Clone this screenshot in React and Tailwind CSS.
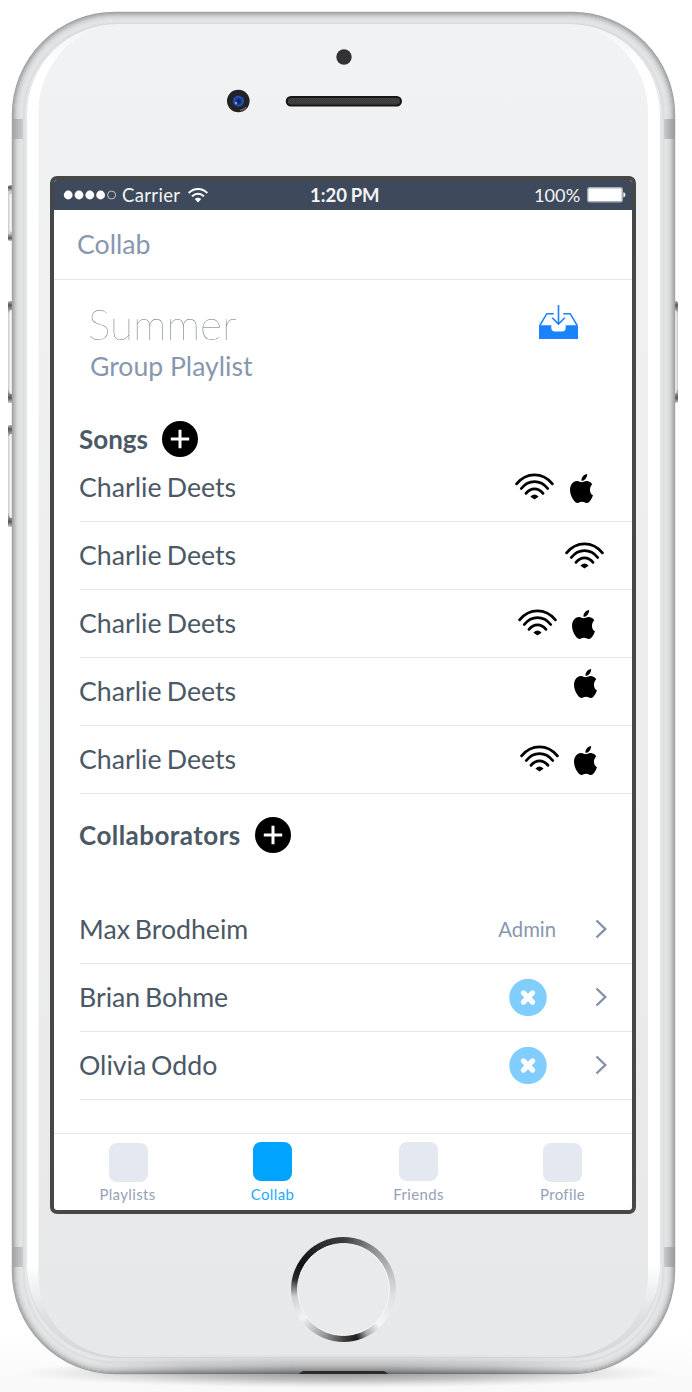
import React from "react";

function PhoneBody() {
  const edge = [
    [0.5, "#a0a1a2"],
    [1.5, "#abacad"],
    [2.5, "#b8b9ba"],
    [3.5, "#c4c5c6"],
    [4.5, "#cfd0d1"],
    [5.5, "#d6d7d8"],
    [6.5, "#dcdddd"],
    [7.5, "#dfe0e0"],
    [8.5, "#e2e3e3"],
    [9.5, "#e4e5e5"],
    [10.5, "#e1e2e3"],
    [11.5, "#dcdee0"],
    [12.5, "#dcdee1"],
    [13.5, "#e6e8ea"],
  ];
  return (
    <svg className="absolute inset-0" width="692" height="1392" viewBox="0 0 692 1392" aria-hidden="true">
      <defs>
        <linearGradient id="panel" x1="0" y1="0" x2="0" y2="1">
          <stop offset="0" stopColor="#f1f2f4" />
          <stop offset="1" stopColor="#e7e8ea" />
        </linearGradient>
        <linearGradient id="side" x1="0" y1="0" x2="0" y2="1">
          <stop offset="0" stopColor="#eff1f3" />
          <stop offset="0.03" stopColor="#ffffff" />
          <stop offset="0.93" stopColor="#ffffff" />
          <stop offset="0.97" stopColor="#dddfe1" />
          <stop offset="1" stopColor="#d6d8da" />
        </linearGradient>
        <linearGradient id="floor" x1="0" y1="0" x2="0" y2="1">
          <stop offset="0" stopColor="#ffffff" />
          <stop offset="1" stopColor="#f8f8f8" />
        </linearGradient>
        <linearGradient id="chin" x1="0" y1="0" x2="0" y2="1">
          <stop offset="0" stopColor="#d4d6d8" stopOpacity="0" />
          <stop offset="0.3" stopColor="#cfd1d3" />
          <stop offset="0.6" stopColor="#b8b9ba" />
          <stop offset="0.85" stopColor="#8a8b8c" />
          <stop offset="1" stopColor="#656667" />
        </linearGradient>
        <linearGradient id="chinfade" x1="0" y1="0" x2="1" y2="0">
          <stop offset="0" stopColor="#fff" stopOpacity="0" />
          <stop offset="0.2" stopColor="#fff" stopOpacity="0.7" />
          <stop offset="0.4" stopColor="#fff" />
          <stop offset="0.6" stopColor="#fff" />
          <stop offset="0.8" stopColor="#fff" stopOpacity="0.7" />
          <stop offset="1" stopColor="#fff" stopOpacity="0" />
        </linearGradient>
        <mask id="chinmask">
          <rect x="90" y="1350" width="507" height="30" fill="url(#chinfade)" />
        </mask>
        <linearGradient id="band" x1="0" y1="0" x2="1" y2="0">
          <stop offset="0" stopColor="#9fa0a1" />
          <stop offset="1" stopColor="#cbcccd" />
        </linearGradient>
        <linearGradient id="bandr" x1="0" y1="0" x2="1" y2="0">
          <stop offset="0" stopColor="#cbcccd" />
          <stop offset="1" stopColor="#979899" />
        </linearGradient>
        <linearGradient id="key" x1="0" y1="0" x2="0" y2="1">
          <stop offset="0" stopColor="#bbb" />
          <stop offset="0.04" stopColor="#555" />
          <stop offset="0.12" stopColor="#cfd0d1" />
          <stop offset="0.86" stopColor="#cfd0d1" />
          <stop offset="0.95" stopColor="#555" />
          <stop offset="1" stopColor="#ccc" />
        </linearGradient>
        <radialGradient id="shadow">
          <stop offset="0" stopColor="#8f8b8b" stopOpacity="0.95" />
          <stop offset="0.5" stopColor="#a5a2a2" stopOpacity="0.65" />
          <stop offset="1" stopColor="#c4c4c4" stopOpacity="0" />
        </radialGradient>
        <radialGradient id="lens" cx="0.5" cy="0.55" r="0.5">
          <stop offset="0" stopColor="#0a1a52" />
          <stop offset="0.35" stopColor="#122f86" />
          <stop offset="0.8" stopColor="#2c55a8" />
          <stop offset="1" stopColor="#14245a" />
        </radialGradient>
        <filter id="soft" x="-5%" y="-5%" width="110%" height="110%">
          <feGaussianBlur stdDeviation="0.7" />
        </filter>
        <pattern id="mesh" width="2" height="2" patternUnits="userSpaceOnUse">
          <rect width="2" height="2" fill="#3b3b3b" />
          <rect width="1" height="1" fill="#484848" />
        </pattern>
      </defs>
      <rect x="0" y="1330" width="692" height="62" fill="url(#floor)" />
      <ellipse cx="343" cy="1373" rx="328" ry="15" fill="url(#shadow)" />
      {[
        [8, 185, 56],
        [8, 301, 102],
        [8, 425, 102],
      ].map(([x, y, h]) => (
        <g key={y}>
          <rect x={x} y={y} width="8" height={h} rx="1.5" fill="url(#key)" />
          <rect x={x + 1.5} y={y + 9} width="4.5" height={h - 18} rx="2" fill="#f5f6f7" />
        </g>
      ))}
      <rect x="670" y="301" width="8" height="102" rx="1.5" fill="url(#key)" />
      <rect x="672" y="310" width="4.5" height="84" rx="2" fill="#f5f6f7" />
      <rect x="12" y="12" width="663" height="1362" rx="103" fill="#e4e5e5" />
      {edge.map(([d, c]) => (
        <rect key={d} x={12 + d} y={12 + d} width={663 - 2 * d} height={1362 - 2 * d} rx={103 - d} fill="none" stroke={c} strokeWidth="1.4" />
      ))}
      <rect x="26" y="24" width="635" height="1334" rx="91" fill="url(#side)" />
      <path
        d="M125 24H561C612 24 648 66 648 112V1276C648 1321 612 1357 561 1357H125C74 1357 38.5 1321 38.5 1276V112C38.5 66 74 24 125 24Z"
        fill="url(#panel)"
        filter="url(#soft)"
      />
      <rect x="26.5" y="23.5" width="634" height="1334" rx="91" fill="none" stroke="#d4d6d8" strokeOpacity="0.65" />
      <rect x="90" y="1354" width="507" height="20" fill="url(#chin)" mask="url(#chinmask)" />
      <path d="M298.5 1374L303 1371H384L388.5 1374Z" fill="#2c2a2a" />
      <rect x="12" y="119" width="11" height="20" fill="url(#band)" />
      <rect x="664" y="119" width="11" height="20" fill="url(#bandr)" />
      <rect x="12" y="1247" width="11" height="20" fill="url(#band)" />
      <rect x="664" y="1247" width="11" height="20" fill="url(#bandr)" />
      <circle cx="344" cy="57" r="7.7" fill="#323234" />
      <circle cx="238.3" cy="101" r="11.3" fill="#222324" />
      <path d="M246 107.5A10 10 0 0 1 240 110.5" stroke="#666" strokeWidth="1.6" fill="none" />
      <circle cx="238.5" cy="100.7" r="6" fill="url(#lens)" />
      <circle cx="236" cy="103" r="1.3" fill="#6f9be8" />
      <rect x="286.7" y="97" width="114.3" height="8.5" rx="4.2" fill="url(#mesh)" stroke="#161616" strokeWidth="2" />
    </svg>
  );
}

function Wifi({ className }) {
  return (
    <svg className={className} width="39" height="27" viewBox="0 0 39 27" fill="none" stroke="#000" strokeWidth="2.8" strokeLinecap="round">
      <path d="M1.6 10.8C11.4-1.2 27.6-1.2 37.4 10.8M6.3 15.5C13.6 6.3 25.4 6.3 32.7 15.5M11 20.3C16 14.3 23 14.3 28 20.3" />
      <path d="M16.2 23.6Q19.5 20.6 22.8 23.6L19.5 25.8Z" fill="#000" stroke="#000" strokeWidth="1.2" strokeLinejoin="round" />
    </svg>
  );
}

function Apple({ className }) {
  return (
    <svg className={className} width="23" height="29" viewBox="2.2 0 19.6 24" preserveAspectRatio="none" fill="#000">
      <path d="M12.152 6.896c-.948 0-2.415-1.078-3.96-1.04-2.04.027-3.91 1.183-4.961 3.014-2.117 3.675-.546 9.103 1.519 12.09 1.013 1.454 2.208 3.09 3.792 3.039 1.52-.065 2.09-.987 3.935-.987 1.831 0 2.35.987 3.96.948 1.637-.026 2.676-1.48 3.676-2.948 1.156-1.688 1.636-3.325 1.662-3.415-.039-.013-2.5-1.221-2.538-4.457-.026-2.84 1.798-4.694 1.915-4.759-1.429-2.09-3.623-2.524-4.39-2.576-2-.156-3.675 1.09-4.61 1.09z" />
      <path d="M15.53 3.83c.843-1.012 1.4-2.427 1.245-3.83-1.207.052-2.662.805-3.532 1.818-.78.896-1.454 2.338-1.273 3.714 1.338.104 2.715-.688 3.559-1.701" />
    </svg>
  );
}

function AddButton({ className }) {
  return (
    <svg className={className} width="36" height="36" viewBox="0 0 36 36">
      <circle cx="18" cy="18" r="18" fill="#000" />
      <path d="M18 8.8V27.2M8.8 18H27.2" stroke="#fff" strokeWidth="3" />
    </svg>
  );
}

const songs = [
  { row: "h-[65px]", text: "pb-[3px]", icons: <><Wifi className="mr-[16px] mb-[5px]" /><Apple className="mr-[39px] mb-[2px]" /></> },
  { row: "h-[68px]", icons: <Wifi className="mr-[28px]" /> },
  { row: "h-[68px]", icons: <><Wifi className="mr-[15px] mb-[3px]" /><Apple className="mr-[37px] mt-[1px]" /></> },
  { row: "h-[68px]", icons: <Apple className="mr-[35px] mb-[17px]" /> },
  { row: "h-[68px]", icons: <><Wifi className="mr-[15px] mb-[3px]" /><Apple className="mr-[35px] mt-[1px]" /></> },
];

const people = [
  { name: "Max Brodheim", admin: true },
  { name: "Brian Bohme" },
  { name: "Olivia Oddo" },
];

const tabs = [
  { name: "Playlists", width: "w-[149px]", box: "mt-[9px] bg-[#e4e8f1]", label: "pr-[2px]" },
  { name: "Collab", width: "w-[139px]", box: "mt-[8px] bg-[#00a4ff]", label: "text-[#1dabf8]" },
  { name: "Friends", width: "w-[153px]", box: "mt-[8px] bg-[#e4e8f1]", label: "" },
  { name: "Profile", width: "w-[135px]", box: "mt-[9px] bg-[#e4e8f1]", label: "" },
];

function StatusBar() {
  return (
    <div className="flex h-[30px] shrink-0 items-center whitespace-nowrap bg-[#3e4a5b] pl-[9px] text-[18.5px] leading-[30px] text-[#f4f5f7]">
      <svg width="54" height="10" viewBox="0 0 54 10" fill="#fff">
        <circle cx="5.2" cy="5" r="4.4" />
        <circle cx="16" cy="5" r="4.4" />
        <circle cx="26.8" cy="5" r="4.4" />
        <circle cx="37.6" cy="5" r="4.4" />
        <circle cx="48.6" cy="5" r="4" fill="none" stroke="#dfe2e6" strokeWidth="0.8" />
      </svg>
      <span className="ml-[5px] w-[60px] tracking-[0.35px]">Carrier</span>
      <svg className="ml-[6px]" width="20" height="15" viewBox="0 0 20 15" fill="none" stroke="#fff" strokeWidth="2">
        <path d="M0.7 5C6-0.3 14-0.3 19.3 5M4 8.4C7.5 5 12.5 5 16 8.4" />
        <path d="M6.8 11Q10 8.6 13.2 11L10 14.4Z" fill="#fff" stroke="none" />
      </svg>
      <span className="ml-[102px] w-[72px] font-bold [word-spacing:-0.8px]">1:20 PM</span>
      <span className="ml-[152px] w-[48px] text-[18.2px]">100%</span>
      <svg className="ml-[5px]" width="39" height="16" viewBox="0 0 39 16">
        <rect x="0.8" y="0.8" width="34.4" height="14" rx="1.5" fill="#fff" stroke="#a9afb9" strokeWidth="1.4" />
        <path d="M36.4 5.2Q38.4 5.4 38.4 7.8T36.4 10.4Z" fill="#fff" />
      </svg>
    </div>
  );
}

export default function App() {
  return (
    <div className="relative h-[1392px] w-[692px] overflow-hidden bg-white font-['Lato',sans-serif]">
      <PhoneBody />
      <div className="relative flex flex-col pl-[50px] pt-[176px]">
        <div className="flex h-[1038px] w-[586px] flex-col overflow-hidden rounded-[7px] border-4 border-[#474747] bg-white">
          <StatusBar />
          <div className="flex h-[70px] shrink-0 items-center border-b border-[#e1e6ec] pl-[23px] text-[26.7px] text-[#8797ae]">Collab</div>

          <div className="flex h-[141px] shrink-0 justify-between pl-[36px] pr-[54px]">
            <div>
              <div className="-ml-[2px] mt-[19px] h-[50px] text-[42.5px] font-thin leading-[50px] text-[#5f6a76] opacity-[0.99] will-change-[opacity]">Summer</div>
              <div className="h-[32px] pt-px text-[26.6px] leading-[32px] text-[#8797ae]">Group Playlist</div>
            </div>
            <svg className="mt-[25px]" width="39" height="35" viewBox="0 0 39 35" fill="none" stroke="#1a82fb">
              <path d="M0 20.3H12.3V22.8Q12.3 26.6 16 26.6H23Q26.7 26.6 26.7 22.8V20.3H39V34H0Z" fill="#1a82fb" stroke="none" />
              <path d="M0.8 20.5L7.8 8.7H14.8M24.2 8.7H31.2L38.2 20.5" strokeWidth="1.5" />
              <path d="M19.5 0V18.5M13.2 12.7L19.5 19L25.8 12.7" strokeWidth="1.6" />
            </svg>
          </div>

          <div className="flex h-[36px] shrink-0 items-center pl-[25px] text-[26px] font-bold text-[#4b5866]">
            <span className="w-[69px]">Songs</span>
            <AddButton className="ml-[14px]" />
          </div>
          {songs.map((song, i) => (
            <div key={i} className={`ml-[26px] flex shrink-0 items-center border-b border-[#dfe5ec] text-[#4b5866] ${song.row}`}>
              <span className={`-ml-px flex-1 text-[26.7px] [word-spacing:-1.5px] ${song.text || ""}`}>Charlie Deets</span>
              {song.icons}
            </div>
          ))}

          <div className="flex h-[102px] shrink-0 items-start pl-[25px] pt-[23px] text-[26px] font-bold leading-[36px] text-[#4b5866]">
            <span className="w-[162px] tracking-[0.45px]">Collaborators</span>
            <AddButton className="ml-[14px]" />
          </div>
          {people.map((p) => (
            <div key={p.name} className="ml-[26px] flex h-[68px] shrink-0 items-center border-b border-[#dfe5ec] text-[#4b5866]">
              <span className="-ml-px flex-1 text-[26.7px] [word-spacing:-2px]">{p.name}</span>
              {p.admin ? (
                <span className="mr-[39px] text-[20.3px] text-[#8797ae]">Admin</span>
              ) : (
                <svg className="mr-[48px]" width="38" height="38" viewBox="0 0.5 38 38">
                  <circle cx="19" cy="19" r="18.7" fill="#80cdfe" />
                  <path d="M14.4 14.4L23.6 23.6M23.6 14.4L14.4 23.6" stroke="#fff" strokeWidth="5.2" strokeLinecap="round" />
                </svg>
              )}
              <svg className="mb-[2px] mr-[25px]" width="12" height="20" viewBox="0 0 12 20" fill="none" stroke="#8492a8" strokeWidth="2.4">
                <path d="M1.5 1.5L10.3 10L1.5 18.5" />
              </svg>
            </div>
          ))}

          <div className="mt-[33px] flex h-[77px] shrink-0 border-t border-[#e3e8f0] text-[#95a1b6]">
            {tabs.map((t) => (
              <div key={t.name} className={`flex flex-col items-center ${t.width}`}>
                <div className={`h-[39px] w-[39px] shrink-0 rounded-[8px] ${t.box}`} />
                <div className={`mt-auto pb-[6px] text-[15px] leading-[20px] tracking-[0.35px] ${t.label}`}>{t.name}</div>
              </div>
            ))}
          </div>
        </div>

        <div className="ml-[241px] mt-[23px] flex h-[105px] w-[105px] items-center justify-center rounded-full bg-[conic-gradient(#3a3b3c_0deg,#8a8b8c_35deg,#c5c6c7_75deg,#dddedf_95deg,#f6f6f6_135deg,#aaaaaa_152deg,#1c1c1c_165deg,#3c3c3c_178deg,#8f8f8f_200deg,#f4f4f4_235deg,#cfcfcf_262deg,#2a2a2a_282deg,#111213_300deg,#2c2d2e_335deg,#3a3b3c_360deg)]">
          <div className="h-[93px] w-[93px] rounded-full border border-[#f6f7f8] bg-[#e9eaec]" />
        </div>
      </div>
    </div>
  );
}
